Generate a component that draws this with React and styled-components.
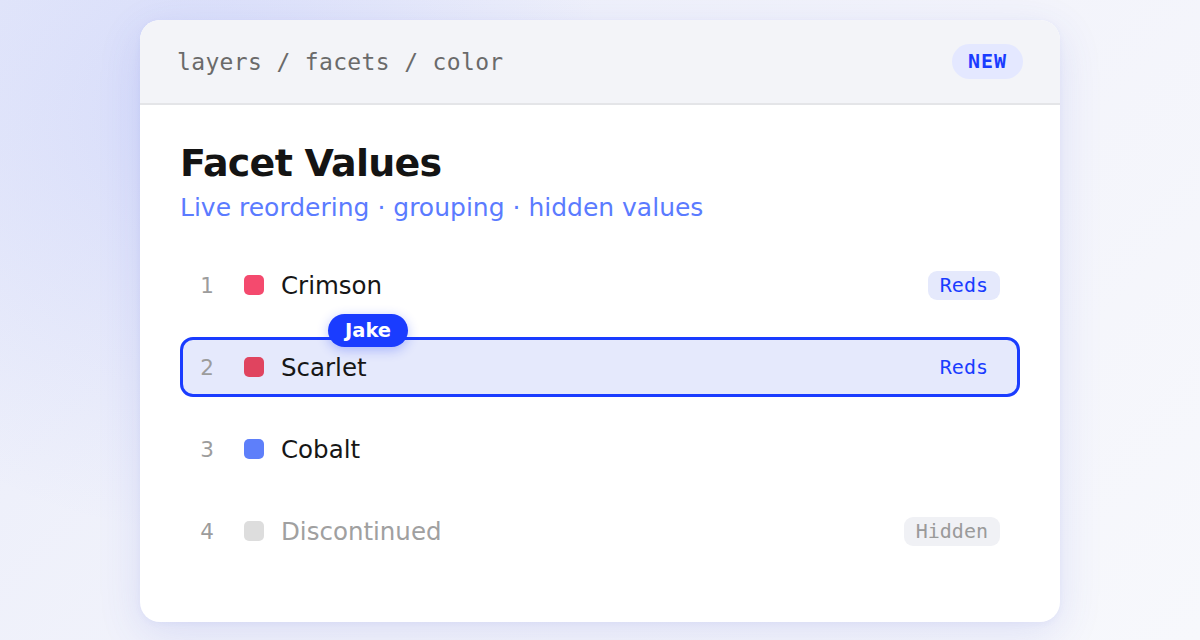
import React from "react";
import styled, { createGlobalStyle, css } from "styled-components";

const GlobalStyle = createGlobalStyle`
  html, body {
    margin: 0;
    padding: 0;
  }
  body {
    width: 1200px;
    height: 640px;
    overflow: hidden;
    background:
      radial-gradient(circle at 16% 18%, rgba(70, 95, 255, 0.12), rgba(70, 95, 255, 0) 420px),
      linear-gradient(135deg, #e9ecfa 0%, #f3f4fb 55%, #f7f8fc 100%);
    font-family: "DejaVu Sans", "Liberation Sans", sans-serif;
  }
`;

const Page = styled.div`
  display: flex;
  justify-content: center;
  padding-top: 20px;
`;

const Card = styled.section`
  width: 920px;
  background: #ffffff;
  border-radius: 20px;
  overflow: hidden;
  box-shadow: 0 12px 44px rgba(60, 80, 210, 0.13), 0 2px 6px rgba(60, 80, 210, 0.05);
`;

const Header = styled.header`
  height: 83px;
  display: flex;
  align-items: center;
  justify-content: space-between;
  padding: 0 37px;
  background: #f3f4f8;
  border-bottom: 2px solid #e4e5e8;
`;

const Crumbs = styled.div`
  font-family: "DejaVu Sans Mono", "Liberation Mono", monospace;
  font-size: 23px;
  letter-spacing: 0.35px;
  color: #6a6a6a;
`;

const NewBadge = styled.span`
  font-family: "DejaVu Sans Mono", "Liberation Mono", monospace;
  font-weight: 700;
  font-size: 20px;
  letter-spacing: 1px;
  color: #1a3cff;
  background: #e4e8ff;
  border-radius: 999px;
  padding: 6px 16px;
  line-height: 23px;
`;

const Body = styled.div`
  padding: 36px 40px 61px;
`;

const Title = styled.h1`
  margin: 0;
  font-size: 38px;
  line-height: 45.6px;
  font-weight: 700;
  letter-spacing: -0.02em;
  color: #141414;
`;

const Subtitle = styled.p`
  margin: 5px 0 0;
  font-size: 25px;
  line-height: 32.5px;
  color: #5b7bff;
`;

const List = styled.ol`
  list-style: none;
  margin: 31px 0 0;
  padding: 0;
  display: flex;
  flex-direction: column;
  gap: 22px;
`;

const Row = styled.li`
  position: relative;
  height: 60px;
  box-sizing: border-box;
  display: flex;
  align-items: center;
  padding: 0 17px 0 14px;
  border: 3px solid transparent;
  border-radius: 13px;

  ${(p) =>
    p.active &&
    css`
      border-color: #1a3cff;
      background: #e5e9fc;
    `}
`;

const Num = styled.span`
  width: 20px;
  text-align: center;
  font-size: 21.5px;
  color: #9c9c9c;
`;

const Swatch = styled.span`
  width: 20px;
  height: 20px;
  border-radius: 5px;
  background: ${(p) => p.color};
  margin-left: 27px;
  flex-shrink: 0;
`;

const Name = styled.span`
  margin-left: 17px;
  font-size: 24.5px;
  color: ${(p) => (p.muted ? "#a0a0a0" : "#161616")};
  flex: 1;
`;

const Tag = styled.span`
  font-family: "DejaVu Sans Mono", "Liberation Mono", monospace;
  font-size: 20px;
  line-height: 23px;
  padding: 3px 12px;
  border-radius: 9px;
  color: ${(p) => (p.muted ? "#9a9a9a" : "#1a3cff")};
  background: ${(p) => (p.muted ? "#f0f1f5" : "#e5e9fc")};
`;

const Presence = styled.span`
  position: absolute;
  top: -26px;
  left: 145px;
  height: 33px;
  line-height: 33px;
  padding: 0 17px;
  border-radius: 999px;
  background: #1a3cff;
  color: #ffffff;
  font-weight: 700;
  font-size: 19.5px;
  box-shadow: 0 3px 12px rgba(26, 60, 255, 0.3);
`;

const values = [
  { name: "Crimson", color: "#f44a6e", tag: "Reds" },
  { name: "Scarlet", color: "#e0445f", tag: "Reds", active: true, user: "Jake" },
  { name: "Cobalt", color: "#5e7ffa" },
  { name: "Discontinued", color: "#dddddd", tag: "Hidden", muted: true },
];

export default function App() {
  return (
    <>
      <GlobalStyle />
      <Page>
        <Card>
          <Header>
            <Crumbs>layers / facets / color</Crumbs>
            <NewBadge>NEW</NewBadge>
          </Header>
          <Body>
            <Title>Facet Values</Title>
            <Subtitle>Live reordering · grouping · hidden values</Subtitle>
            <List>
              {values.map((v, i) => (
                <Row key={v.name} active={v.active}>
                  {v.user && <Presence>{v.user}</Presence>}
                  <Num>{i + 1}</Num>
                  <Swatch color={v.color} />
                  <Name muted={v.muted}>{v.name}</Name>
                  {v.tag && <Tag muted={v.muted}>{v.tag}</Tag>}
                </Row>
              ))}
            </List>
          </Body>
        </Card>
      </Page>
    </>
  );
}
